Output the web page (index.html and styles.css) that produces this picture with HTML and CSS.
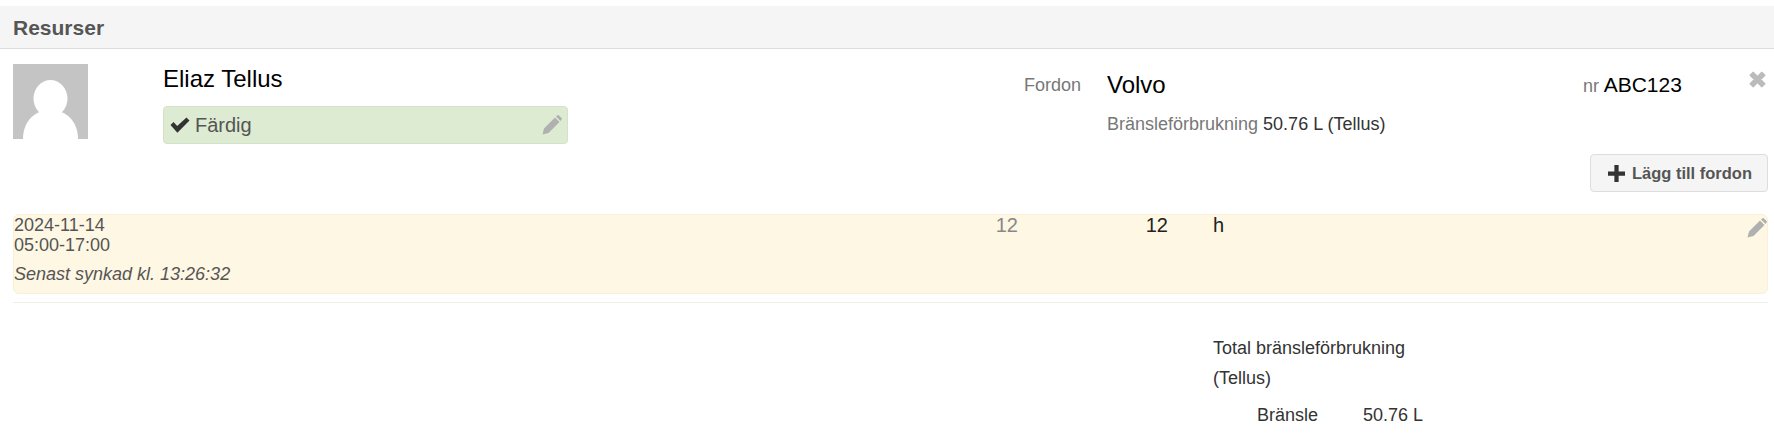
FILE: index.html
```html
<!DOCTYPE html>
<html lang="sv">
<head>
<meta charset="utf-8">
<title>Resurser</title>
<link rel="stylesheet" href="styles.css">
</head>
<body>
<section class="panel">
  <h2 class="panel-heading">Resurser</h2>
  <div class="resource">
    <svg class="avatar" viewBox="0 0 75 75"><rect width="75" height="75" fill="#c4c4c4"/><ellipse cx="37.5" cy="34.5" rx="17" ry="18.5" fill="#fff"/><path d="M10 75C10 57 22 46 37.5 46S65 57 65 75Z" fill="#fff"/></svg>
    <div class="person">
      <div class="person-name">Eliaz Tellus</div>
      <div class="status">
        <svg class="icon-check" viewBox="0 0 20 16"><path d="M0.5 8 3.5 5 7.2 9 16.5 0.5 19.5 3.5 7.4 15.7Z" fill="#333"/></svg>
        <span class="status-text">Färdig</span>
        <svg class="icon-pencil" viewBox="0 0 20 20"><path d="M0.5 19.5 2 13.5 13 2.5 17.5 7 6.5 18ZM14 1.5 15.5 0.3Q16.2-.2 17 .4L19.6 3Q20.2 3.8 19.6 4.5L18.5 6Z" fill="#b0b0b0"/></svg>
      </div>
    </div>
    <div class="vehicle-label">Fordon</div>
    <div class="vehicle">
      <div class="vehicle-top">
        <span class="vehicle-name">Volvo</span>
        <span class="vehicle-nr"><span class="muted">nr</span> ABC123</span>
        <svg class="icon-close" viewBox="0 0 16 16"><path d="M1 4 4 1 8 5 12 1 15 4 11 8 15 12 12 15 8 11 4 15 1 12 5 8Z" fill="#bbb" stroke="#bbb" stroke-linejoin="round"/></svg>
      </div>
      <div class="fuel"><span class="muted">Bränsleförbrukning</span> 50.76 L (Tellus)</div>
    </div>
  </div>
  <div class="actions">
    <button class="btn" type="button">
      <svg class="icon-plus" viewBox="0 0 16 16"><path d="M6 0H10V6H16V10H10V16H6V10H0V6H6Z" fill="#333"/></svg>
      Lägg till fordon
    </button>
  </div>
  <div class="row">
    <div class="row-date">
      <div>2024-11-14</div>
      <div>05:00-17:00</div>
      <div class="synced">Senast synkad kl. 13:26:32</div>
    </div>
    <div class="row-planned">12</div>
    <div class="row-actual">12</div>
    <div class="row-unit">h</div>
    <svg class="icon-pencil" viewBox="0 0 20 20"><path d="M0.5 19.5 2 13.5 13 2.5 17.5 7 6.5 18ZM14 1.5 15.5 0.3Q16.2-.2 17 .4L19.6 3Q20.2 3.8 19.6 4.5L18.5 6Z" fill="#b0b0b0"/></svg>
  </div>
  <div class="divider"></div>
  <div class="total">
    <div class="total-title">Total bränsleförbrukning (Tellus)</div>
    <div class="total-line"><span class="total-key">Bränsle</span><span>50.76 L</span></div>
  </div>
</section>
</body>
</html>
```
FILE: styles.css
```css
* { box-sizing: border-box; }
html, body { margin: 0; padding: 0; background: #fff; }
body {
  height: 443px;
  overflow: hidden;
  font-family: "Liberation Sans", Arial, sans-serif;
  font-size: 18px;
  color: #555;
}
.panel { padding-top: 6px; }
.panel-heading {
  margin: 0;
  height: 43px;
  padding: 0 13px;
  line-height: 43px;
  font-size: 21px;
  font-weight: bold;
  background: #f5f5f5;
  border-bottom: 1px solid #ddd;
  color: #555;
}
.resource {
  display: grid;
  grid-template-columns: 150px 405px 1fr 661px;
  margin: 15px 6px 0 13px;
}
.avatar { display: block; width: 75px; height: 75px; }
.person-name { padding-top: 1px; font-size: 24px; line-height: 28px; color: #000; }
.status {
  display: flex;
  align-items: center;
  height: 38px;
  margin-top: 13px;
  padding: 0 5px 0 6px;
  background: #dcebd2;
  border: 1px solid #d3e3c8;
  border-radius: 4px;
  font-size: 20px;
}
.icon-check { width: 20px; height: 16px; margin-right: 5px; }
.status-text { flex: 1; }
.icon-pencil { width: 20px; height: 20px; }
.vehicle-label { text-align: right; padding: 11px 26px 0 0; color: #777; line-height: 20px; }
.muted { color: #777; }
.vehicle-top { display: flex; align-items: flex-start; padding-top: 7px; }
.vehicle-name { width: 476px; font-size: 24px; line-height: 28px; color: #000; }
.vehicle-nr { flex: 1; font-size: 21px; line-height: 28px; color: #000; }
.vehicle-nr .muted { font-size: 18px; }
.icon-close { width: 17px; height: 17px; margin: 0 2px 0 0; }
.fuel { margin-top: 12px; line-height: 24px; color: #333; }
.actions { display: flex; justify-content: flex-end; margin: 10px 6px 0 0; }
.btn {
  display: flex;
  align-items: center;
  gap: 7px;
  height: 38px;
  padding: 0 15px 0 17px;
  background: #f5f5f5;
  border: 1px solid #ddd;
  border-radius: 4px;
  font: bold 16.5px "Liberation Sans", Arial, sans-serif;
  color: #555;
}
.icon-plus { width: 17px; height: 17px; }
.row {
  display: grid;
  grid-template-columns: 800px 204px 150px 1fr auto;
  height: 80px;
  margin: 22px 6px 0 13px;
  background: #fef7e3;
  border: 1px solid #fbf0d5;
  border-radius: 6px;
  line-height: 20px;
}
.row .icon-pencil { margin: 3px 0 0 0; }
.synced { margin-top: 9px; font-style: italic; }
.row-planned { text-align: right; font-size: 20px; color: #888; }
.row-actual { text-align: right; font-size: 20px; color: #222; }
.row-unit { padding-left: 45px; font-size: 20px; color: #222; }
.divider { height: 1px; margin: 8px 6px 0 13px; background: #eee; }
.total { margin: 30px 0 0 1213px; color: #333; }
.total-title { width: 200px; line-height: 30px; }
.total-line { display: flex; margin: 10px 0 0 44px; line-height: 24px; }
.total-key { width: 106px; }
```
